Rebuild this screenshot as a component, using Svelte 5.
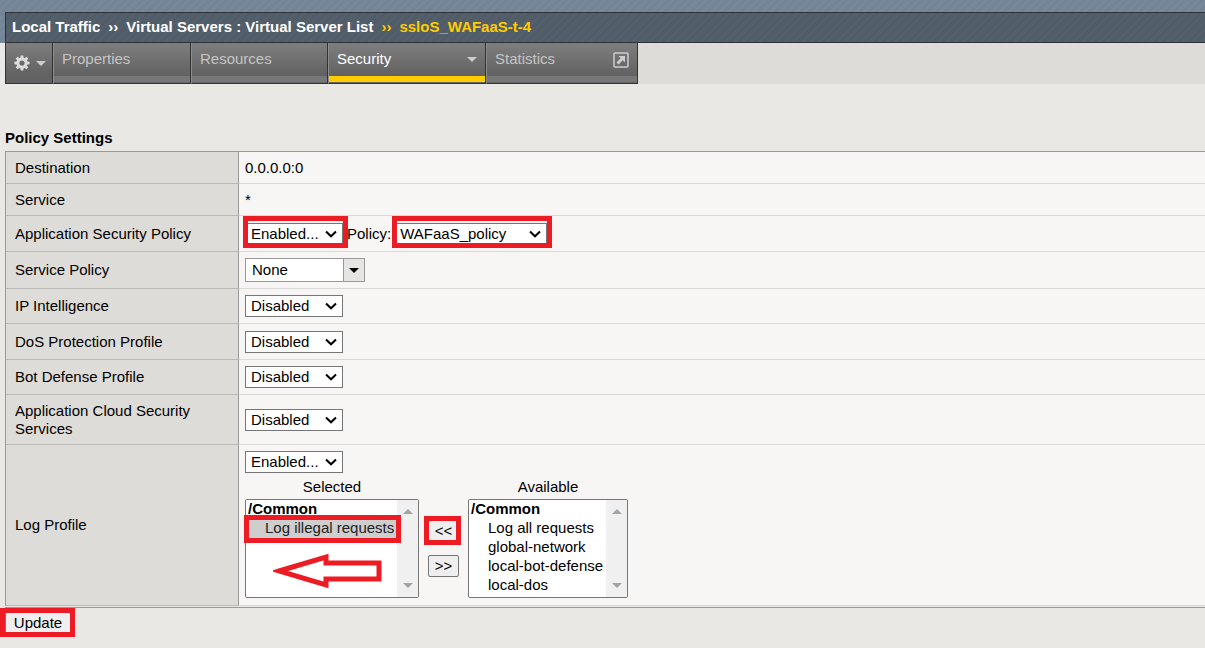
<script>
  const tabs = [
    { label: 'Properties', kind: 'properties' },
    { label: 'Resources', kind: 'resources' },
    { label: 'Security', kind: 'security', active: true, menu: true },
    { label: 'Statistics', kind: 'statistics', external: true }
  ];
  const simple = [
    { id: 'ip', label: 'IP Intelligence', size: 'r35' },
    { id: 'dos', label: 'DoS Protection Profile', size: 'r36' },
    { id: 'bot', label: 'Bot Defense Profile', size: 'r35' },
    { id: 'cloud', label: 'Application Cloud Security Services', size: 'r50' }
  ];
  const available = ['Log all requests', 'global-network', 'local-bot-defense', 'local-dos'];
  const teeth = [0, 45, 90, 135, 180, 225, 270, 315];
</script>

{#snippet chevron()}
  <svg class="chevron" viewBox="0 0 12 8" aria-hidden="true"><path d="M1 1.5 6 6.3 11 1.5" /></svg>
{/snippet}

{#snippet dropdown(id, value, wide, marked)}
  <span class="drop" class:wide>
    <select {id}><option>{value}</option></select>
    {@render chevron()}
    {#if marked}<span class="mark"></span>{/if}
  </span>
{/snippet}

{#snippet scrollbar()}
  <span class="bar" aria-hidden="true">
    <svg viewBox="0 0 10 5"><path d="M0 5 5 0 10 5Z" /></svg>
    <svg viewBox="0 0 10 5"><path d="M0 0H10L5 5Z" /></svg>
  </span>
{/snippet}

<header>
  <nav class="crumbs" aria-label="Breadcrumb">
    <a href="#traffic">Local Traffic</a><span>››</span><a href="#list">Virtual Servers : Virtual Server List</a><span class="gold">››</span><span class="gold">ssloS_WAFaaS-t-4</span>
  </nav>
</header>
<nav class="tabs" aria-label="Sections">
  <button class="gear" aria-label="Options">
    <svg class="cog" viewBox="0 0 16 16" aria-hidden="true">
      {#each teeth as angle}
        <path d="M6.7 0.4h2.6l.5 4H6.2Z" transform="rotate({angle} 8 8)" />
      {/each}
      <circle cx="8" cy="8" r="4.1" />
    </svg>
    <svg class="caret" viewBox="0 0 10 5" aria-hidden="true"><path d="M0 0H10L5 5Z" /></svg>
  </button>
  {#each tabs as tab}
    <a href="#{tab.kind}" class="tab {tab.kind}" class:active={tab.active}>
      <span>{tab.label}</span>
      {#if tab.menu}<svg class="caret" viewBox="0 0 10 5" aria-hidden="true"><path d="M0 0H10L5 5Z" /></svg>{/if}
      {#if tab.external}
        <svg class="ext" viewBox="0 0 16 16" aria-hidden="true">
          <rect x="1" y="1" width="14" height="14" rx="1" />
          <path class="stem" d="m4.5 11.5 5-5" /><path class="tip" d="M5.5 4H12v6.5Z" />
        </svg>
      {/if}
    </a>
  {/each}
</nav>

<main>
  <h1>Policy Settings</h1>
  <table>
    <tbody>
      <tr class="r32"><th scope="row">Destination</th><td>0.0.0.0:0</td></tr>
      <tr class="r32"><th scope="row">Service</th><td>*</td></tr>
      <tr class="r36">
        <th scope="row"><label for="asp">Application Security Policy</label></th>
        <td>
          <div class="line">
            {@render dropdown('asp', 'Enabled...', false, true)}
            <label class="policy" for="policy">Policy:</label>
            {@render dropdown('policy', 'WAFaaS_policy', true, true)}
          </div>
        </td>
      </tr>
      <tr class="r37">
        <th scope="row"><label for="service">Service Policy</label></th>
        <td>
          <div class="combo">
            <input id="service" type="text" value="None" />
            <button aria-label="Show service policies"><svg viewBox="0 0 10 5" aria-hidden="true"><path d="M0 0H10L5 5Z" /></svg></button>
          </div>
        </td>
      </tr>
      {#each simple as row}
        <tr class={row.size}>
          <th scope="row"><label for={row.id}>{row.label}</label></th>
          <td><div class="line">{@render dropdown(row.id, 'Disabled', false, false)}</div></td>
        </tr>
      {/each}
      <tr>
        <th scope="row"><label for="log">Log Profile</label></th>
        <td class="log">
          <div class="line">{@render dropdown('log', 'Enabled...', false, false)}</div>
          <div class="picker">
            <div class="col">
              <label for="selected">Selected</label>
              <div class="list selected">
                <select id="selected" size="5">
                  <optgroup label="/Common"><option class="on">Log illegal requests</option></optgroup>
                </select>
                {@render scrollbar()}
                <span class="mark row-mark"></span>
                <svg class="arrow" viewBox="0 0 110 36" aria-hidden="true"><path d="M6 18 53 4V10H106V26H53V32Z" /></svg>
              </div>
            </div>
            <div class="moves">
              <span class="move"><button>&lt;&lt;</button><span class="mark"></span></span>
              <span class="move"><button>&gt;&gt;</button></span>
            </div>
            <div class="col">
              <label for="available">Available</label>
              <div class="list available">
                <select id="available" size="5">
                  <optgroup label="/Common">
                    {#each available as name}<option>{name}</option>{/each}
                  </optgroup>
                </select>
                {@render scrollbar()}
              </div>
            </div>
          </div>
        </td>
      </tr>
    </tbody>
  </table>
  <div class="actions"><span class="update"><button>Update</button><span class="mark"></span></span></div>
</main>

<style>
  :global(body) {
    margin: 0;
    background: #eae8e4;
    color: #000;
    font: 15px/18px "Liberation Sans", Arial, sans-serif;
  }
  :global(*) { box-sizing: border-box; }
  button, input, select { font: inherit; color: inherit; margin: 0; }
  a { color: inherit; text-decoration: none; }

  header {
    padding: 12px 0 0 5px;
    background: repeating-linear-gradient(135deg, #768899 0 3px, #728495 3px 6px);
  }
  .crumbs {
    display: flex;
    gap: 8px;
    height: 31px;
    padding: 5px 6px;
    border: solid #2e3135;
    border-width: 1px 0 1px 1px;
    background: repeating-linear-gradient(135deg, #535f6b 0 3px, #505c68 3px 6px);
    color: #fff;
    font-weight: bold;
  }
  .gold { color: #fc0; }

  .tabs {
    display: flex;
    height: 41px;
    margin-left: 5px;
    background: #dedcd8;
  }
  .gear, .tab {
    display: flex;
    border: solid #333;
    border-width: 0 1px 1px 0;
    background: linear-gradient(#7e7e7e, #626262 80%);
  }
  .gear {
    width: 48px;
    padding: 0 6px 0 8px;
    border-left-width: 1px;
    align-items: center;
    justify-content: space-between;
  }
  .cog { width: 16px; height: 16px; fill: #ddd; }
  .cog circle { fill: none; stroke: #ddd; stroke-width: 3; }
  .caret { width: 10px; height: 5px; fill: #ccc; }
  .tab {
    justify-content: space-between;
    padding: 7px 8px;
    border-left: 1px solid #8c8c8c;
    box-shadow: inset 0 -1px #666, inset 0 -7px #777;
    color: #c4c4c4;
  }
  .tab.active { color: #fff; box-shadow: inset 0 -1px #666, inset 0 -7px #fc0; }
  .tab .caret { margin-top: 7px; }
  .properties { width: 138px; }
  .resources { width: 137px; }
  .security { width: 158px; }
  .statistics { width: 152px; }
  .ext { width: 16px; height: 16px; margin-top: 2px; fill: none; stroke: #ccc; stroke-width: 1.5; }
  .ext .stem { stroke-width: 3; }
  .ext .tip { fill: #ccc; stroke: none; }

  main { padding: 45px 0 12px 5px; }
  h1 { margin: 0 0 4px; font-size: 15px; line-height: 18px; }
  table {
    width: 100%;
    border-spacing: 0;
    border-top: 1px solid #999;
    border-left: 1px solid #999;
  }
  th, td { padding: 0 9px; text-align: left; font-weight: normal; border-bottom: 1px solid #bdbbb8; }
  th { width: 233px; background: #dedcd8; border-right: 1px solid #999; }
  td { padding: 0 6px; background: #f7f6f4; border-bottom-color: #d9d9d7; }
  .r32 { height: 32px; }
  .r35 { height: 35px; }
  .r36 { height: 36px; }
  .r37 { height: 37px; }
  .r50 { height: 50px; }
  td.log { padding: 6px 6px 7px; }

  .line { display: flex; align-items: center; }
  .drop { position: relative; width: 98px; height: 22px; }
  .drop.wide { width: 153px; }
  .drop select {
    width: 100%;
    height: 100%;
    padding: 0 5px;
    border: 1px solid #767676;
    border-radius: 0;
    background: #fff;
    appearance: none;
  }
  .chevron {
    position: absolute;
    right: 6px;
    top: 7px;
    width: 12px;
    height: 8px;
    fill: none;
    stroke: #000;
    stroke-width: 2;
    pointer-events: none;
  }
  .policy { padding: 0 3px 0 4px; }
  .mark {
    position: absolute;
    inset: -7px -5px -3px -2px;
    border: 5px solid #ed1c24;
    pointer-events: none;
  }

  .combo { display: flex; width: 120px; height: 24px; border: 1px solid #999; }
  .combo input { flex: 1; min-width: 0; padding: 0 6px; border: 0; background: #fff; }
  .combo button {
    display: grid;
    place-items: center;
    width: 21px;
    padding: 0;
    border: 0;
    border-left: 1px solid #999;
    background: #e6e5e3;
  }
  .combo svg { width: 10px; height: 5px; }

  .picker { display: flex; margin-top: 5px; }
  .col { display: flex; flex-direction: column; gap: 3px; }
  .col label { text-align: center; }
  .list {
    position: relative;
    display: flex;
    height: 99px;
    border: 1px solid #767676;
    border-radius: 2px;
    background: #fff;
  }
  .list.selected { width: 174px; }
  .list.available { width: 160px; }
  .list select {
    flex: 1;
    min-width: 0;
    height: 97px;
    padding: 0;
    border: 0;
    background: #fff;
    overflow: hidden;
    outline: 0;
  }
  optgroup { padding: 0; line-height: 19px; font-weight: bold; }
  option { min-height: 19px; padding: 0 2px 0 19px; line-height: 19px; font-weight: normal; }
  option.on { background: #cecece; color: #222; }
  .bar {
    display: flex;
    flex-direction: column;
    justify-content: space-between;
    align-items: center;
    width: 21px;
    padding: 9px 0;
    background: #f0f0f0;
  }
  .bar svg { width: 10px; height: 5px; fill: #a3a3a3; }
  .row-mark { inset: 15px 17px 54px -2px; }
  .arrow {
    position: absolute;
    left: 27px;
    top: 53px;
    width: 110px;
    height: 36px;
    fill: none;
    stroke: #ed1c24;
    stroke-width: 5;
    pointer-events: none;
  }
  .moves { display: flex; flex-direction: column; gap: 13px; padding: 42px 9px 0; }
  .move { position: relative; height: 22px; }
  .move button, .update button {
    height: 22px;
    padding: 0;
    border: 1px solid #767676;
    border-radius: 2px;
    background: #efefef;
  }
  .move button { width: 31px; }
  .move .mark { inset: -4px -2px -3px -4px; }
  .actions { display: flex; margin-top: 1px; padding-top: 4px; border-top: 1px solid #999; }
  .update { position: relative; height: 22px; }
  .update button { width: 66px; }
  .update .mark { inset: -4px -4px -3px -5px; }
</style>
